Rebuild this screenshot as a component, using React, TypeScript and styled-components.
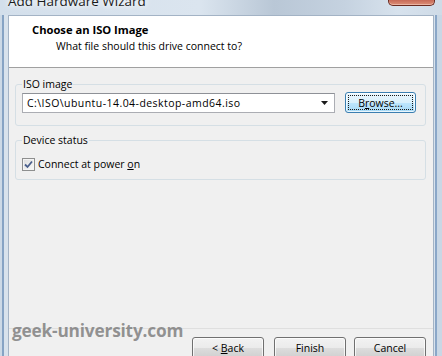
import React from 'react';
import styled, { createGlobalStyle } from 'styled-components';

const Global = createGlobalStyle`
  html, body { margin: 0; padding: 0; background: #d6e1ec; }
  body { width: 442px; height: 356px; overflow: hidden; }
  * { box-sizing: border-box; }
`;

const Window = styled.div`
  position: relative;
  width: 442px;
  height: 356px;
  overflow: hidden;
  display: flex;
  flex-direction: column;
  font-family: "Open Sans", "Noto Sans", sans-serif;
  font-size: 10.5px;
  color: #000;
  background:
    linear-gradient(90deg, #ccd9e6 0px, #ccd9e6 2px, #86a3c4 2px, #86a3c4 4px, #d8e2ec 4px,
      #d8e2ec calc(100% - 7px), #8aa7c8 calc(100% - 7px), #8aa7c8 calc(100% - 5px), #c9d7e5 calc(100% - 5px));
`;

const TitleBar = styled.div`
  height: 15px;
  display: flex;
  justify-content: space-between;
  align-items: flex-start;
  padding: 0 7px 0 8px;
  background: linear-gradient(90deg, #d3dfeb 0%, #dbe5ef 45%, #b9c7d6 62%, #c5d2e0 78%, #d7e2ed 90%, #cfdbe7 100%);
`;

const Title = styled.div`
  margin-top: -7px;
  font-size: 13.5px;
  line-height: 16px;
  color: #1b1b1b;
  text-shadow: 0 0 5px #ffffff, 0 0 8px #ffffff;
`;

const CloseButton = styled.div`
  width: 47px;
  height: 6px;
  border: 1px solid #6a2a20;
  border-top: none;
  border-radius: 0 0 5px 5px;
  background: linear-gradient(#c76a57, #dc8f78);
  box-shadow: inset 0 -1px 0 #eab3a2;
`;

const Frame = styled.div`
  flex: 1;
  display: flex;
  padding: 0 8px;
  min-height: 0;
`;

const Client = styled.div`
  flex: 1;
  display: flex;
  flex-direction: column;
  background: #f0f0f0;
  border: 1px solid #a3b3c5;
  border-bottom: none;
  min-height: 0;
`;

const Header = styled.div`
  height: 52px;
  background: #ffffff;
  border-bottom: 1px solid #a0a0a0;
  padding: 6px 0 0 23px;
  display: flex;
  flex-direction: column;
`;

const HeaderTitle = styled.div`
  font-weight: 700;
  font-size: 11.2px;
  line-height: 16px;
`;

const HeaderSubtitle = styled.div`
  line-height: 16px;
  padding-left: 24px;
`;

const Body = styled.div`
  flex: 1;
  display: flex;
  flex-direction: column;
  padding: 0 7px 0 6px;
`;

const Group = styled.fieldset<{ $top: number; $bottom: number }>`
  margin: ${p => p.$top}px 0 0 0;
  padding: 0 9px ${p => p.$bottom}px 6px;
  border: 1px solid #d5dfe5;
  border-radius: 3px;
  min-width: 0;
`;

const Legend = styled.legend`
  padding: 0 1px;
  line-height: 16px;
`;

const Row = styled.div`
  display: flex;
  align-items: center;
`;

const Combo = styled.div`
  flex: 1;
  height: 20px;
  display: flex;
  align-items: center;
  background: #ffffff;
  border: 1px solid #abadb3;
  border-top-color: #8e9197;
  padding: 0 4px 0 4px;
`;

const ComboText = styled.span`
  flex: 1;
  white-space: nowrap;
  letter-spacing: 0.45px;
`;

const Arrow = styled.svg`
  width: 7px;
  height: 4px;
  margin-right: 2px;
`;

const Button = styled.button<{ $focused?: boolean }>`
  flex: none;
  width: 72px;
  height: 22px;
  padding: 0;
  font-family: inherit;
  font-size: inherit;
  color: #000;
  border-radius: 3px;
  border: 1px solid ${p => (p.$focused ? '#3c7fb1' : '#707070')};
  background: ${p =>
    p.$focused
      ? 'linear-gradient(#eaf6fd 0%, #d9f0fc 50%, #bee6fd 51%, #a7d9f5 100%)'
      : 'linear-gradient(#f2f2f2 0%, #ebebeb 50%, #dddddd 51%, #cfcfcf 100%)'};
  box-shadow: inset 0 0 0 1px rgba(255, 255, 255, 0.75);
  display: flex;
  align-items: center;
  justify-content: center;
  white-space: pre;
`;

const FocusRect = styled.span`
  display: flex;
  align-items: center;
  justify-content: center;
  width: calc(100% - 6px);
  height: calc(100% - 6px);
  outline: 1px dotted #1a1a1a;
`;

const BrowseButton = styled(Button)`
  width: 71px;
  height: 21px;
  margin-left: 10px;
`;

const U = styled.span`
  text-decoration: underline;
`;

const CheckRow = styled.label`
  display: flex;
  align-items: center;
  height: 16px;
  margin-top: 8px;
  gap: 3px;
`;

const CheckBox = styled.span`
  width: 13px;
  height: 13px;
  border: 1px solid #8e8f8f;
  background: linear-gradient(135deg, #dcdcdc, #fafafa);
  box-shadow: inset 0 0 0 1px #f4f4f4;
  display: flex;
  align-items: center;
  justify-content: center;
`;

const Spacer = styled.div`
  flex: 1;
`;

const Footer = styled.div`
  border-top: 1px solid #dfdfdf;
  display: flex;
  justify-content: flex-end;
  padding: 8px 7px 0 0;
  height: 28px;
  gap: 8px;
`;

const BackButton = styled(Button)`
  margin-right: 2px;
`;

const Watermark = styled.div`
  position: absolute;
  left: 12px;
  top: 319px;
  font-family: "Open Sans", sans-serif;
  font-weight: 700;
  font-size: 17.3px;
  letter-spacing: -0.2px;
  color: rgba(128, 128, 128, 0.85);
  pointer-events: none;
`;

export default function App() {
  return (
    <>
      <Global />
      <Window>
        <TitleBar>
          <Title>Add Hardware Wizard</Title>
          <CloseButton />
        </TitleBar>
        <Frame>
          <Client>
            <Header>
              <HeaderTitle>Choose an ISO Image</HeaderTitle>
              <HeaderSubtitle>What file should this drive connect to?</HeaderSubtitle>
            </Header>
            <Body>
              <Group $top={8} $bottom={12}>
                <Legend>ISO image</Legend>
                <Row>
                  <Combo>
                    <ComboText>C:\ISO\ubuntu-14.04-desktop-amd64.iso</ComboText>
                    <Arrow viewBox="0 0 7 4">
                      <path d="M0 0 H7 L3.5 4 Z" fill="#1a1a1a" />
                    </Arrow>
                  </Combo>
                  <BrowseButton $focused>
                    <FocusRect>
                      B<U>r</U>owse...
                    </FocusRect>
                  </BrowseButton>
                </Row>
              </Group>
              <Group $top={6} $bottom={7}>
                <Legend>Device status</Legend>
                <CheckRow>
                  <CheckBox>
                    <svg width="9" height="9" viewBox="0 0 9 9">
                      <path d="M1 4.5 L3.5 7 L8 1.5" stroke="#4a5f8c" strokeWidth="1.8" fill="none" />
                    </svg>
                  </CheckBox>
                  <span>
                    Connect at power <U>o</U>n
                  </span>
                </CheckRow>
              </Group>
              <Spacer />
            </Body>
            <Footer>
              <BackButton>
                {'< '}
                <U>B</U>ack
              </BackButton>
              <Button>Finish</Button>
              <Button>Cancel</Button>
            </Footer>
          </Client>
        </Frame>
        <Watermark>geek-university.com</Watermark>
      </Window>
    </>
  );
}
